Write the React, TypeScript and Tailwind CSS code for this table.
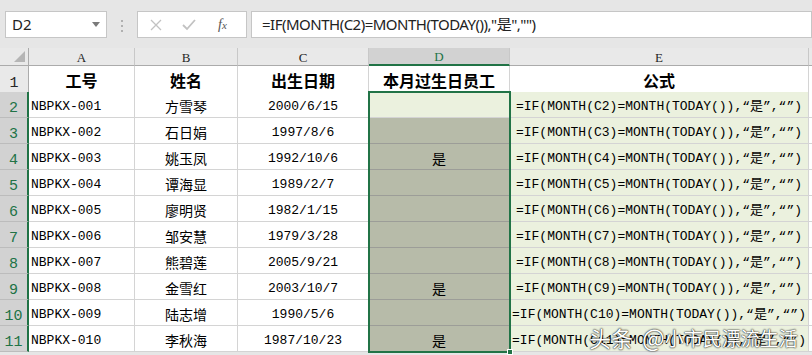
import React from 'react';

type Row = { id: string; name: string; birth: string; flag: string };

const rows: Row[] = [
  { id: 'NBPKX-001', name: '方雪琴', birth: '2000/6/15', flag: '' },
  { id: 'NBPKX-002', name: '石日娟', birth: '1997/8/6', flag: '' },
  { id: 'NBPKX-003', name: '姚玉凤', birth: '1992/10/6', flag: '是' },
  { id: 'NBPKX-004', name: '谭海显', birth: '1989/2/7', flag: '' },
  { id: 'NBPKX-005', name: '廖明贤', birth: '1982/1/15', flag: '' },
  { id: 'NBPKX-006', name: '邹安慧', birth: '1979/3/28', flag: '' },
  { id: 'NBPKX-007', name: '熊碧莲', birth: '2005/9/21', flag: '' },
  { id: 'NBPKX-008', name: '金雪红', birth: '2003/10/7', flag: '是' },
  { id: 'NBPKX-009', name: '陆志增', birth: '1990/5/6', flag: '' },
  { id: 'NBPKX-010', name: '李秋海', birth: '1987/10/23', flag: '是' },
];

const mono = "font-['Liberation_Mono','Noto_Sans_CJK_SC',monospace]";
const cjk = "font-['Noto_Sans_CJK_SC',sans-serif]";
const gridCols = 'grid grid-cols-[29px_106px_103px_131px_141px_299px_1fr]';

function ColHeader({ label, active }: { label: string; active?: boolean }) {
  return (
    <div
      className={`flex items-end justify-center pb-[1px] text-[13px] leading-none border-r border-[#c8c8c8] font-['Liberation_Serif',serif] ${
        active ? 'bg-[#d2d2d2] text-[#217346] border-b-2 border-b-[#217346]' : 'bg-[#e9e9e9] text-[#262626] border-b border-b-[#ababab]'
      }`}
    >
      {label}
    </div>
  );
}

export default function App() {
  return (
    <div className="relative w-[812px] h-[355px] overflow-hidden bg-[#e6e6e6] select-none">
      {/* Formula bar */}
      <div className="flex items-start h-[48px] pt-[11px] pl-[5px]">
        <div className="flex items-center justify-between w-[102px] h-[27px] bg-white border border-[#c6c6c6] pl-[6px] pr-[6px]">
          <span className="text-[15px] text-[#222] font-['Noto_Sans',sans-serif]">D2</span>
          <span className="w-0 h-0 border-l-[4px] border-r-[4px] border-t-[5px] border-l-transparent border-r-transparent border-t-[#7a7a7a]" />
        </div>
        <div className="flex flex-col gap-[3px] w-[30px] items-center pt-[9px]">
          <span className="w-[2px] h-[2px] bg-[#b0b0b0]" />
          <span className="w-[2px] h-[2px] bg-[#b0b0b0]" />
          <span className="w-[2px] h-[2px] bg-[#b0b0b0]" />
        </div>
        <div className="flex items-center w-[110px] h-[27px] bg-white border border-[#c6c6c6] pl-[12px] gap-[20px] text-[#c2c2c2]">
          <svg width="12" height="12" viewBox="0 0 12 12" stroke="currentColor" strokeWidth="1.3">
            <path d="M1 1L11 11M11 1L1 11" />
          </svg>
          <svg width="14" height="12" viewBox="0 0 14 12" fill="none" stroke="currentColor" strokeWidth="1.8">
            <path d="M1 6l4 4 8-9" />
          </svg>
          <span className="text-[14px] italic text-[#555] font-['Liberation_Serif',serif] ml-[2px]">
            f<span className="text-[11px]">x</span>
          </span>
        </div>
        <div className="flex items-center flex-1 h-[27px] ml-[4px] bg-white border border-[#c6c6c6] pl-[10px] text-[15px] text-[#222] font-['Noto_Sans','Noto_Sans_CJK_SC',sans-serif] tracking-[-0.5px]">
          =IF(MONTH(C2)=MONTH(TODAY()),"是","")
        </div>
      </div>

      {/* Column headers */}
      <div className={`${gridCols} h-[18px]`}>
        <div className="relative bg-[#e9e9e9] border-r border-b border-[#ababab]">
          <span className="absolute right-[3px] bottom-[3px] w-0 h-0 [border-bottom:11px_solid_#b5b5b5] [border-left:11px_solid_transparent]" />
        </div>
        <ColHeader label="A" />
        <ColHeader label="B" />
        <ColHeader label="C" />
        <ColHeader label="D" active />
        <ColHeader label="E" />
        <div className="bg-[#e9e9e9] border-b border-[#ababab]" />
      </div>

      {/* Title row */}
      <div className={`${gridCols} h-[26px]`}>
        <div className={`flex items-end justify-center pb-[1px] bg-[#e9e9e9] border-r border-[#ababab] border-b border-b-[#d4d4d4] text-[15px] leading-none text-[#262626] ${mono}`}>
          1
        </div>
        {['工号', '姓名', '出生日期', '本月过生日员工', '公式'].map((t) => (
          <div
            key={t}
            className={`flex items-center justify-center pt-[2px] bg-white border-r border-b border-[#d4d4d4] text-[16px] font-bold text-black ${cjk}`}
          >
            {t}
          </div>
        ))}
        <div className="bg-white border-b border-[#d4d4d4]" />
      </div>

      {/* Data rows */}
      {rows.map((r, i) => {
        const n = i + 2;
        const first = i === 0;
        return (
          <div key={r.id} className={`${gridCols} h-[26px]`}>
            <div
              className={`flex items-end justify-center pb-[1px] bg-[#d2d2d2] text-[#217346] border-r-2 border-[#217346] border-b border-b-[#bcbcbc] text-[15px] leading-none ${mono}`}
            >
              {n}
            </div>
            <div className={`flex items-center pl-[2px] pt-[4px] bg-white border-r border-b border-[#d4d4d4] text-[13px] text-black ${mono}`}>
              {r.id}
            </div>
            <div className={`flex items-center justify-center pt-[3px] bg-white border-r border-b border-[#d4d4d4] text-[14px] text-black ${cjk}`}>
              {r.name}
            </div>
            <div className={`flex items-center justify-center pt-[4px] bg-white border-r border-b border-[#d4d4d4] text-[13px] text-black ${mono}`}>
              {r.birth}
            </div>
            <div
              className={`flex items-center justify-center pt-[3px] border-r border-b text-[14px] text-black ${cjk} ${
                first ? 'bg-[#ebf1de] border-[#d4d4d4]' : 'bg-[#b7bba9] border-[#9c9d98]'
              }`}
            >
              {r.flag}
            </div>
            <div className={`flex items-center justify-center overflow-hidden whitespace-nowrap pt-[4px] bg-[#ebf1de] border-r border-b border-[#d4d4d4] text-[13px] text-black ${mono}`}>
              =IF(MONTH(C{n})=MONTH(TODAY()),“是”,“”)
            </div>
            <div className="bg-white border-b border-[#d4d4d4]" />
          </div>
        );
      })}

      {/* Selection outline D2:D11 */}
      <div className="absolute left-[368px] top-[91px] w-[143px] h-[262px] border-2 border-[#217346] pointer-events-none" />
      <div className="absolute left-[507px] top-[349px] w-[6px] h-[6px] bg-[#217346] border border-white pointer-events-none" />

      {/* Watermark */}
      <div className="absolute left-[589px] top-[322px] flex items-center h-[30px] leading-none text-white font-['Noto_Sans_CJK_SC',sans-serif] [text-shadow:0_0_2px_rgba(0,0,0,0.9),0_0_1px_rgba(0,0,0,0.9)] pointer-events-none whitespace-nowrap">
        <span className="text-[22px]">头条</span>
        <span className="text-[24px] ml-[9px]">@</span>
        <span className="text-[19px]">小市民漂流生活</span>
      </div>
    </div>
  );
}
